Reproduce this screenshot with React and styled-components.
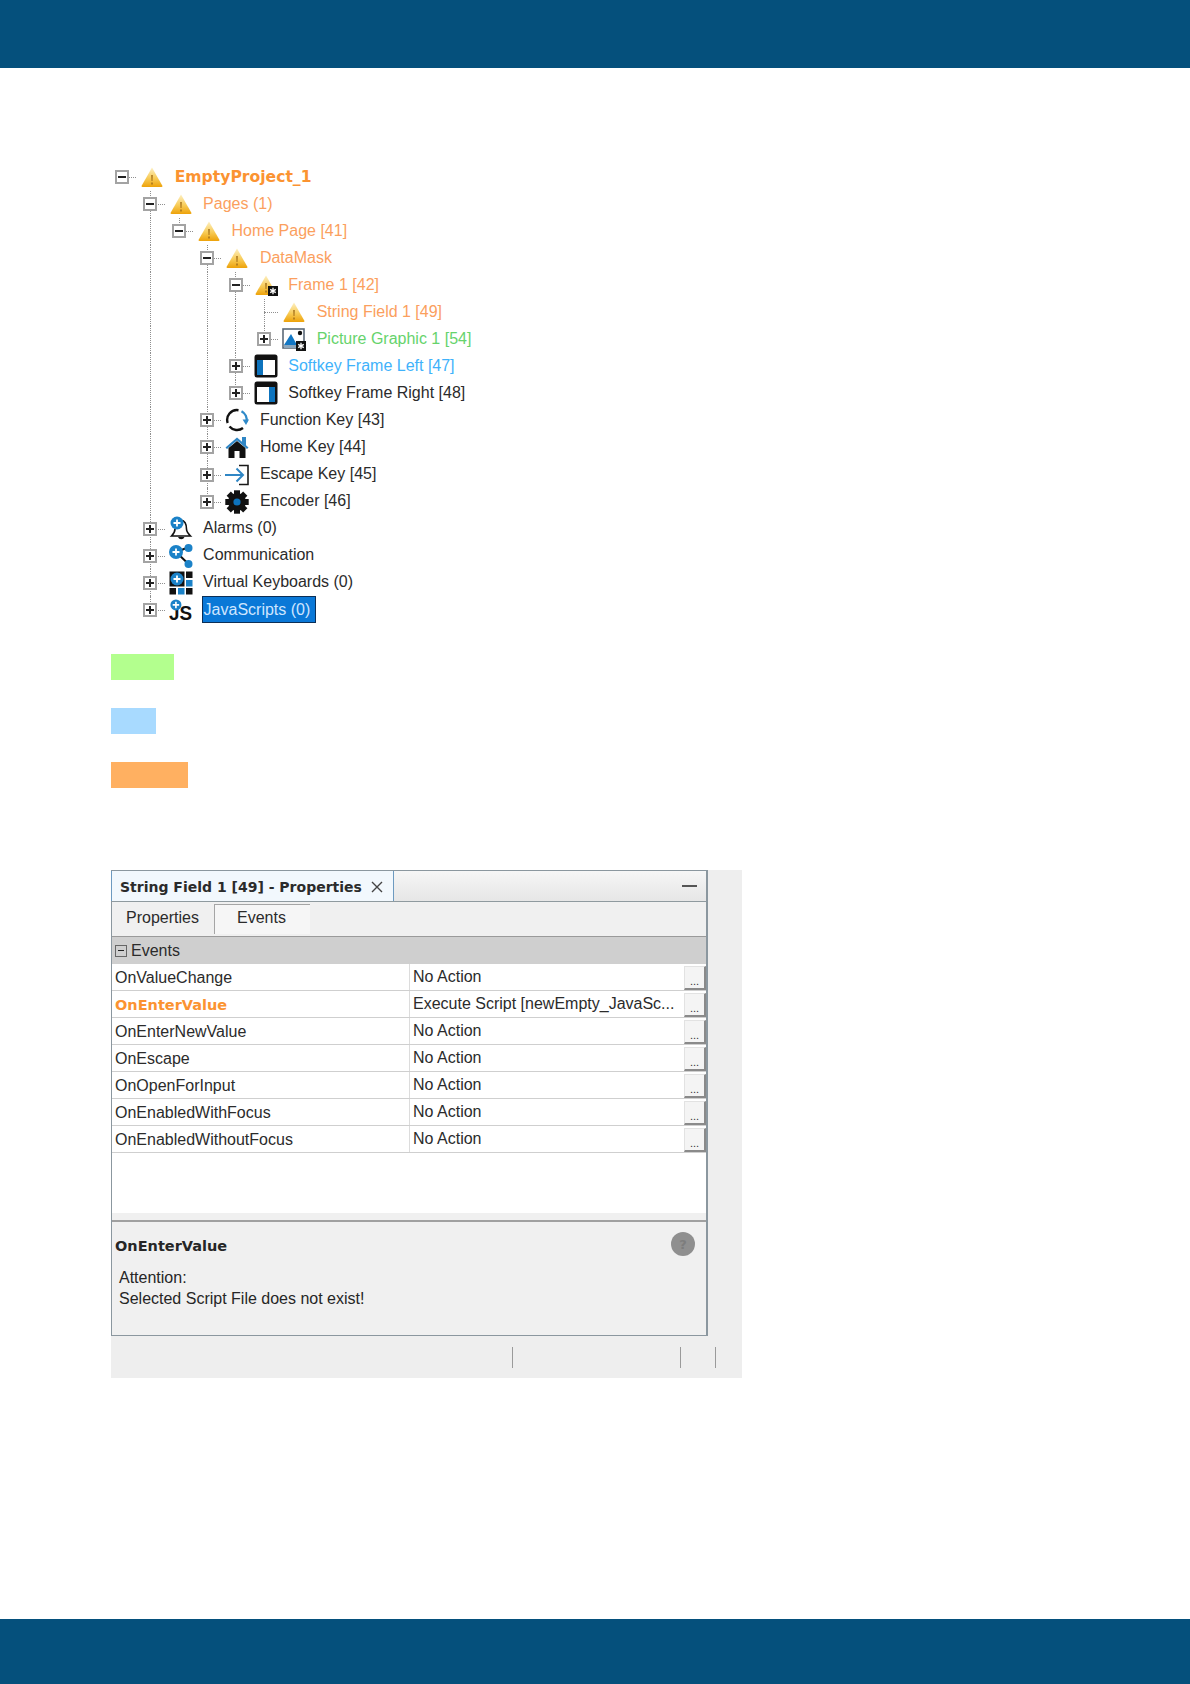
import styled, { createGlobalStyle, css } from 'styled-components'

const GlobalStyle = createGlobalStyle`
  html, body {
    margin: 0;
    padding: 0;
    background: #fff;
    font-family: "Liberation Sans", sans-serif;
  }
`

const BOLD_FONT = '"DejaVu Sans", "Liberation Sans", sans-serif'

const Page = styled.div`
  width: 1190px;
  min-height: 1684px;
  display: flex;
  flex-direction: column;
`

const Band = styled.div`
  background: #05507c;
  height: ${(p) => p.$height}px;
`

const Main = styled.main`
  flex: 1;
  padding: 95.5px 0 0 111px;
`

/* Tree */

const Tree = styled.div`
  margin-left: -3.2px;
`

const Row = styled.div`
  display: flex;
  align-items: center;
  height: 27.06px;
`

const guideLine = css`
  content: '';
  position: absolute;
  left: 14px;
  top: 0;
  border-left: 1px dotted #8f8f8f;
`

const Indent = styled.div`
  position: relative;
  flex: none;
  width: 28.4px;
  height: 100%;

  ${(p) =>
    p.$guide &&
    css`
      &::before {
        ${guideLine}
        bottom: 0;
      }
    `}
`

const Connector = styled(Indent)`
  display: flex;
  align-items: center;
  justify-content: center;

  &::before {
    ${guideLine}
    bottom: ${(p) => (p.$last ? '50%' : '0')};
    display: ${(p) => (p.$root ? 'none' : 'block')};
  }

  &::after {
    content: '';
    position: absolute;
    left: 14px;
    right: 0;
    top: 50%;
    border-top: 1px dotted #8f8f8f;
  }
`

const Expander = styled.span`
  position: relative;
  z-index: 1;
  box-sizing: border-box;
  width: 14px;
  height: 14px;
  background: #fff;
  border: 2px solid #a3a3a3;

  &::before {
    content: '';
    position: absolute;
    left: 1px;
    right: 1px;
    top: 4px;
    height: 2px;
    background: #222;
  }

  ${(p) =>
    p.$closed &&
    css`
      &::after {
        content: '';
        position: absolute;
        top: 1px;
        bottom: 1px;
        left: 4px;
        width: 2px;
        background: #222;
      }
    `}
`

const IconSlot = styled.span`
  flex: none;
  width: 24px;
  height: 24px;
  margin-left: 4px;
  display: flex;
  align-items: center;
  justify-content: center;
`

const Label = styled.span`
  margin: -1px 0 0 10.5px;
  font-size: 16px;
  line-height: 20px;
  white-space: nowrap;
  color: ${(p) => p.$color || '#2b2b2b'};

  ${(p) =>
    p.$bold &&
    css`
      font-family: ${BOLD_FONT};
      font-weight: 700;
      font-size: 15.6px;
    `}

  ${(p) =>
    p.$selected &&
    css`
      margin: 0 0 0 10px;
      padding: 3px 5px 2px 1px;
      background: #0a78d7;
      outline: 1px solid #0b2f57;
      color: #cfe6ff;
    `}
`

/* Legend */

const Legend = styled.div`
  display: flex;
  flex-direction: column;
  gap: 28px;
  margin-top: 31px;
`

const Swatch = styled.div`
  height: 26px;
  width: ${(p) => p.$width}px;
  background: ${(p) => p.$color};
`

/* Properties window */

const PropsWindow = styled.div`
  width: 631px;
  margin-top: 82px;
  background: #eeeeee;
`

const Panel = styled.div`
  box-sizing: border-box;
  width: 597px;
  height: 466px;
  display: flex;
  flex-direction: column;
  background: #fff;
  border: 1px solid #8b979f;
  border-right-width: 2px;
`

const TitleBar = styled.div`
  flex: none;
  box-sizing: border-box;
  height: 31px;
  display: flex;
  align-items: center;
  justify-content: space-between;
  padding-right: 9px;
  background: linear-gradient(#f6f6f6, #e6e6e6);
  border-bottom: 1px solid #8f9a9f;
`

const TitleTab = styled.div`
  box-sizing: border-box;
  width: 283px;
  height: 100%;
  display: flex;
  align-items: center;
  gap: 9px;
  padding: 1px 0 0 8px;
  background: #f2f8fd;
  border-right: 1px solid #6d9ac0;
  border-left: 1px solid #6d9ac0;
  margin-left: -1px;
  font-family: ${BOLD_FONT};
  font-size: 14px;
  font-weight: 700;
  color: #2b2b2b;
  white-space: nowrap;
`

const CloseIcon = styled.svg`
  width: 12px;
  height: 12px;
  flex: none;
`

const Minimize = styled.span`
  width: 15px;
  height: 2px;
  background: #555;
`

const TabRow = styled.div`
  flex: none;
  box-sizing: border-box;
  height: 35px;
  display: flex;
  align-items: flex-end;
  padding: 0 0 2px 14px;
  background: #f0f0f0;
  border-bottom: 1px solid #9a9a9a;
`

const TabItem = styled.div`
  box-sizing: border-box;
  height: 30px;
  display: flex;
  align-items: center;
  padding-bottom: 3px;
  font-size: 16px;
  color: #2b2b2b;

  ${(p) =>
    p.$active
      ? css`
          width: 96px;
          padding-left: 22px;
          margin-left: 14px;
          background: #f6f6f6;
          border-left: 1px solid #a5a5a5;
          border-top: 1px solid #a5a5a5;
        `
      : css`
          width: 74px;
        `}
`

const GroupHeader = styled.div`
  flex: none;
  height: 27px;
  display: flex;
  align-items: center;
  gap: 4px;
  padding-left: 3px;
  background: #cfcfcf;
  font-size: 16px;
  color: #2b2b2b;
`

const GroupToggle = styled.span`
  position: relative;
  box-sizing: border-box;
  width: 12px;
  height: 12px;
  border: 1px solid #666;

  &::before {
    content: '';
    position: absolute;
    left: 2px;
    right: 2px;
    top: 4px;
    height: 1px;
    background: #222;
  }
`

const EventRow = styled.div`
  flex: none;
  box-sizing: border-box;
  height: 27px;
  display: grid;
  grid-template-columns: 298px 1fr 22px;
  align-items: stretch;
  background: #fff;
  border-bottom: 1px solid #cfcfcf;
`

const EventName = styled.div`
  display: flex;
  align-items: center;
  padding: 2px 0 0 3px;
  border-right: 1px solid #dcdcdc;
  font-size: 16px;
  color: #2b2b2b;

  ${(p) =>
    p.$warn &&
    css`
      font-family: ${BOLD_FONT};
      font-size: 14.5px;
      font-weight: 700;
      color: #fb9331;
    `}
`

const EventValue = styled.div`
  display: flex;
  align-items: center;
  padding: 0 0 1px 3px;
  font-size: 16px;
  color: #2b2b2b;
  white-space: nowrap;
  overflow: hidden;
`

const DotsButton = styled.div`
  box-sizing: border-box;
  margin-top: 2px;
  display: flex;
  align-items: flex-end;
  justify-content: center;
  padding-bottom: 1px;
  background: #f4f4f4;
  border-top: 1px solid #e2e2e2;
  border-left: 1px solid #e2e2e2;
  border-right: 2px solid #8a8a8a;
  border-bottom: 2px solid #8a8a8a;
  font-size: 11px;
  line-height: 11px;
  color: #333;
`

const EmptyArea = styled.div`
  flex: 1;
  background: #fff;
  border-bottom: 7px solid #f0f0f0;
`

const InfoPane = styled.div`
  flex: none;
  box-sizing: border-box;
  height: 115px;
  padding: 12px 0 0 3px;
  background: #f0f0f0;
  border-top: 2px solid #a0a0a0;
  display: flex;
  flex-direction: column;
`

const InfoHead = styled.div`
  display: flex;
  align-items: center;
  justify-content: space-between;
  padding-right: 11px;
  height: 24px;
  font-family: ${BOLD_FONT};
  font-size: 14.5px;
  font-weight: 700;
  color: #262626;
`

const HelpDot = styled.span`
  width: 24px;
  height: 24px;
  margin-top: -4px;
  border-radius: 50%;
  background: #8f8f8f;
  color: #7d7d7d;
  display: flex;
  align-items: center;
  justify-content: center;
  font-size: 13px;
  font-weight: 700;
`

const InfoText = styled.div`
  margin: 9px 0 0 4px;
  font-size: 16px;
  line-height: 21px;
  color: #262626;
`

const StatusBar = styled.div`
  height: 42px;
  display: flex;
  align-items: center;
`

const StatusCell = styled.div`
  box-sizing: border-box;
  width: ${(p) => p.$width}px;
  height: 21px;
  border-right: 1px solid #9a9a9a;
`

/* Icons */

const Warning = ({ badge }) => (
  <svg width="24" height="22" viewBox="0 0 24 22">
    <defs>
      <linearGradient id="warn" x1="0" y1="0" x2="0" y2="1">
        <stop offset="0" stopColor="#fdf0c4" />
        <stop offset="0.55" stopColor="#f8cc58" />
        <stop offset="1" stopColor="#eda20a" />
      </linearGradient>
    </defs>
    <path d="M12 1.5 L22.5 20 Q22.5 21 21.5 21 H2.5 Q1.5 21 1.5 20 Z" fill="url(#warn)" />
    <path d="M11.2 9 h1.6 l-.3 6 h-1 Z M11.2 16.6 h1.6 v1.8 h-1.6 Z" fill="#a8741c" />
    {badge && <Badge x={14} y={12} />}
  </svg>
)

const Badge = ({ x, y }) => (
  <g transform={`translate(${x} ${y})`}>
    <rect width="10" height="10" fill="#111" />
    <path d="M5 1.8 V8.2 M2.2 3.4 L7.8 6.6 M7.8 3.4 L2.2 6.6" stroke="#fff" strokeWidth="1.3" />
  </g>
)

const PictureIcon = () => (
  <svg width="24" height="24" viewBox="0 0 24 24">
    <rect x="1" y="2" width="21" height="19" fill="#fff" stroke="#5c6a78" strokeWidth="1.6" />
    <path d="M2 18 L9 7 L15 18 Z" fill="#1277c4" />
    <circle cx="18" cy="6" r="2.2" fill="#111" />
    <rect x="2" y="18" width="12" height="3" fill="#8aa6bd" />
    <Badge x={14} y={14} />
  </svg>
)

const FrameIcon = ({ side }) => (
  <svg width="24" height="24" viewBox="0 0 24 24">
    <rect x="0.5" y="0.5" width="23" height="23" rx="2.5" fill="#111" />
    <rect x="3" y="6" width="18" height="15" fill="#fff" />
    <rect x={side === 'left' ? 3 : 15} y="6" width="6" height="15" fill="#0d73bd" />
  </svg>
)

const FunctionIcon = () => (
  <svg width="24" height="24" viewBox="0 0 24 24" fill="none" strokeWidth="2.4">
    <path d="M2.7 15 A9.8 9.8 0 0 1 13.5 2.2" stroke="#111" />
    <path d="M16.5 3.2 A9.8 9.8 0 0 1 21.4 14" stroke="#2f8ac9" />
    <path d="M17.6 11.5 L21 17 L24 11.5 Z" fill="#2f8ac9" stroke="none" />
    <path d="M4.5 18.5 A9.8 9.8 0 0 0 18 20" stroke="#111" />
  </svg>
)

const HomeIcon = () => (
  <svg width="24" height="24" viewBox="0 0 24 24">
    <path d="M3.5 13 L12 6 L20.5 13 V23 H14.5 V16 H9.5 V23 H3.5 Z" fill="#111" />
    <path d="M0.5 12.5 L12 2.5 L17 6.8 V2 H21 V10.3 L23.5 12.5 L22 14 L12 5.5 L2 14 Z" fill="#2f86c5" />
  </svg>
)

const EscapeIcon = () => (
  <svg width="24" height="24" viewBox="0 0 24 24" fill="none">
    <path d="M14 2.5 H23 V21.5 H14" stroke="#1a1a1a" strokeWidth="1.6" />
    <path d="M0 12 H18 M11.5 5.5 L18 12 L11.5 18.5" stroke="#2f86c5" strokeWidth="2" />
  </svg>
)

const GEAR_TEETH = [0, 45, 90, 135, 180, 225, 270, 315]

const GearIcon = () => (
  <svg width="24" height="24" viewBox="0 0 24 24">
    {GEAR_TEETH.map((deg) => (
      <rect key={deg} x="9" y="0.3" width="6" height="6" fill="#111" transform={`rotate(${deg} 12 12)`} />
    ))}
    <circle cx="12" cy="12" r="9" fill="#111" />
    <circle cx="12" cy="12" r="3.6" fill="#0d73bd" />
  </svg>
)

const PlusDot = ({ cx = 7.5, cy = 7.5, r = 6.5 }) => (
  <g>
    <circle cx={cx} cy={cy} r={r} fill="#1b82c8" />
    <path d={`M${cx - 3.5} ${cy} H${cx + 3.5} M${cx} ${cy - 3.5} V${cy + 3.5}`} stroke="#fff" strokeWidth="1.8" />
  </g>
)

const BellIcon = () => (
  <svg width="24" height="26" viewBox="0 0 24 26" fill="none">
    <path d="M12 4 C17 5 17.5 9 17.5 13 C17.5 16 19.5 18 21.5 20 H2.5 C4.5 18 6 16 6 13" stroke="#111" strokeWidth="1.6" />
    <path d="M9 21 A3.5 3.5 0 0 0 15.5 21 Z" fill="#111" />
    <PlusDot cx={8} cy={7} r={6.5} />
  </svg>
)

const ShareIcon = () => (
  <svg width="24" height="24" viewBox="0 0 24 24">
    <path d="M7 8 L19 3.5 M7 8 L19 19.5" stroke="#111" strokeWidth="2" />
    <circle cx="19.5" cy="4" r="4" fill="#1b82c8" />
    <circle cx="19.5" cy="20" r="4" fill="#1b82c8" />
    <PlusDot cx={7} cy={8} r={7} />
  </svg>
)

const KeyboardIcon = () => (
  <svg width="24" height="24" viewBox="0 0 24 24">
    <rect x="0.5" y="0.5" width="15" height="15" fill="#111" />
    <rect x="17" y="0.5" width="6.5" height="6.5" fill="#111" />
    <rect x="17" y="9" width="6.5" height="6.5" fill="#1b82c8" />
    <rect x="0.5" y="17" width="6.5" height="6.5" fill="#111" />
    <rect x="9" y="17" width="6.5" height="6.5" fill="#1b82c8" />
    <rect x="17" y="17" width="6.5" height="6.5" fill="#111" />
    <PlusDot cx={8} cy={8} r={6.5} />
  </svg>
)

const ScriptIcon = () => (
  <svg width="26" height="32" viewBox="0 0 26 32">
    <text x="0" y="26.5" fontFamily="Liberation Sans, sans-serif" fontWeight="700" fontSize="22" fill="#111" textLength="25" lengthAdjust="spacingAndGlyphs">
      JS
    </text>
    <PlusDot cx={7.5} cy={10.5} r={6} />
  </svg>
)

/* Data */

const ORANGE = '#fb9f5e'
const BLUE = '#3fb2fb'
const GREEN = '#66d36c'

const project = {
  label: 'EmptyProject_1',
  color: '#fb9331',
  bold: true,
  icon: <Warning />,
  children: [
    {
      label: 'Pages (1)',
      color: ORANGE,
      icon: <Warning />,
      children: [
        {
          label: 'Home Page [41]',
          color: ORANGE,
          icon: <Warning />,
          children: [
            {
              label: 'DataMask',
              color: ORANGE,
              icon: <Warning />,
              children: [
                {
                  label: 'Frame 1 [42]',
                  color: ORANGE,
                  icon: <Warning badge />,
                  children: [
                    { label: 'String Field 1 [49]', color: ORANGE, icon: <Warning />, leaf: true },
                    { label: 'Picture Graphic 1 [54]', color: GREEN, icon: <PictureIcon /> },
                  ],
                },
                { label: 'Softkey Frame Left [47]', color: BLUE, icon: <FrameIcon side="left" /> },
                { label: 'Softkey Frame Right [48]', icon: <FrameIcon side="right" /> },
              ],
            },
            { label: 'Function Key [43]', icon: <FunctionIcon /> },
            { label: 'Home Key [44]', icon: <HomeIcon /> },
            { label: 'Escape Key [45]', icon: <EscapeIcon /> },
            { label: 'Encoder [46]', icon: <GearIcon /> },
          ],
        },
      ],
    },
    { label: 'Alarms (0)', icon: <BellIcon /> },
    { label: 'Communication', icon: <ShareIcon /> },
    { label: 'Virtual Keyboards (0)', icon: <KeyboardIcon /> },
    { label: 'JavaScripts (0)', icon: <ScriptIcon />, selected: true },
  ],
}

const events = [
  { name: 'OnValueChange', value: 'No Action' },
  { name: 'OnEnterValue', value: 'Execute Script [newEmpty_JavaSc...', warn: true },
  { name: 'OnEnterNewValue', value: 'No Action' },
  { name: 'OnEscape', value: 'No Action' },
  { name: 'OnOpenForInput', value: 'No Action' },
  { name: 'OnEnabledWithFocus', value: 'No Action' },
  { name: 'OnEnabledWithoutFocus', value: 'No Action' },
]

// flatten the nested project into rows, keeping which ancestor guides stay open
function flatten(node, guides = [], last = true, root = true, rows = []) {
  rows.push({ node, guides, last, root })
  const kids = node.children || []
  kids.forEach((kid, i) => {
    flatten(kid, root ? [] : [...guides, !last], i === kids.length - 1, false, rows)
  })
  return rows
}

function TreeRow({ node, guides, last, root }) {
  return (
    <Row>
      {root ? null : <Indent />}
      {guides.map((open, i) => (
        <Indent key={i} $guide={open} />
      ))}
      <Connector $last={last} $root={root}>
        {!node.leaf && <Expander $closed={!node.children} />}
      </Connector>
      <IconSlot>{node.icon}</IconSlot>
      <Label $color={node.color} $bold={node.bold} $selected={node.selected}>
        {node.label}
      </Label>
    </Row>
  )
}

export default function App() {
  return (
    <Page>
      <GlobalStyle />
      <Band $height={68} />
      <Main>
        <Tree>
          {flatten(project).map((row) => (
            <TreeRow key={row.node.label} {...row} />
          ))}
        </Tree>

        <Legend>
          <Swatch $width={63} $color="#b3ff8e" />
          <Swatch $width={45} $color="#a8daff" />
          <Swatch $width={77} $color="#ffb061" />
        </Legend>

        <PropsWindow>
          <Panel>
            <TitleBar>
              <TitleTab>
                String Field 1 [49] - Properties
                <CloseIcon viewBox="0 0 12 12">
                  <path d="M1 1 L11 11 M11 1 L1 11" stroke="#444" strokeWidth="1.4" />
                </CloseIcon>
              </TitleTab>
              <Minimize />
            </TitleBar>
            <TabRow>
              <TabItem>Properties</TabItem>
              <TabItem $active>Events</TabItem>
            </TabRow>
            <GroupHeader>
              <GroupToggle />
              Events
            </GroupHeader>
            {events.map((ev) => (
              <EventRow key={ev.name}>
                <EventName $warn={ev.warn}>{ev.name}</EventName>
                <EventValue>{ev.value}</EventValue>
                <DotsButton>...</DotsButton>
              </EventRow>
            ))}
            <EmptyArea />
            <InfoPane>
              <InfoHead>
                OnEnterValue
                <HelpDot>?</HelpDot>
              </InfoHead>
              <InfoText>
                Attention:
                <br />
                Selected Script File does not exist!
              </InfoText>
            </InfoPane>
          </Panel>
          <StatusBar>
            <StatusCell $width={402} />
            <StatusCell $width={168} />
            <StatusCell $width={35} />
          </StatusBar>
        </PropsWindow>
      </Main>
      <Band $height={65} />
    </Page>
  )
}
